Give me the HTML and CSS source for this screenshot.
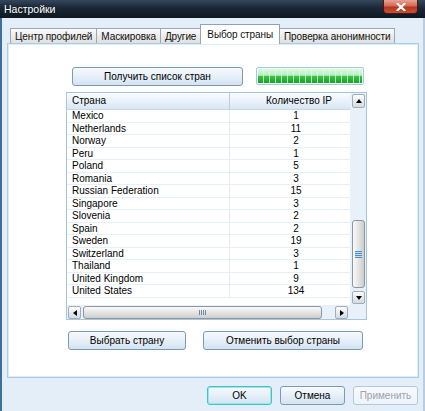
FILE: index.html
```html
<!DOCTYPE html>
<html lang="ru">
<head>
    <meta charset="UTF-8">
    <meta name="viewport" content="width=device-width, initial-scale=1.0">
    <title>Настройки</title>
    <link rel="stylesheet" href="styles.css">
</head>
<body>
    <div class="window">
        <div class="titlebar">
            <span class="title">Настройки</span>
            <span class="close">
                <svg width="10" height="8" viewBox="0 0 10 8"><path d="M1.5 0.8 L8.5 7.2 M8.5 0.8 L1.5 7.2" stroke="#fff" stroke-width="2.2" stroke-linecap="round"/></svg>
            </span>
        </div>
        <div class="client">
            <div class="tabs">
                <div class="tab">Центр профилей</div>
                <div class="tab">Маскировка</div>
                <div class="tab">Другие</div>
                <div class="tab active">Выбор страны</div>
                <div class="tab">Проверка анонимности</div>
            </div>
            <div class="pane">
                <div class="toolbar">
                    <button class="btn btn-fetch">Получить список стран</button>
                    <div class="progress"><div class="progress-fill"></div></div>
                </div>
                <div class="list">
                    <div class="grid">
                        <div class="head">
                            <div class="cell name">Страна</div>
                            <div class="cell count">Количество IP</div>
                        </div>
                        <div class="row"><span class="cell name">Mexico</span><span class="cell count">1</span></div>
                        <div class="row"><span class="cell name">Netherlands</span><span class="cell count">11</span></div>
                        <div class="row"><span class="cell name">Norway</span><span class="cell count">2</span></div>
                        <div class="row"><span class="cell name">Peru</span><span class="cell count">1</span></div>
                        <div class="row"><span class="cell name">Poland</span><span class="cell count">5</span></div>
                        <div class="row"><span class="cell name">Romania</span><span class="cell count">3</span></div>
                        <div class="row"><span class="cell name">Russian Federation</span><span class="cell count">15</span></div>
                        <div class="row"><span class="cell name">Singapore</span><span class="cell count">3</span></div>
                        <div class="row"><span class="cell name">Slovenia</span><span class="cell count">2</span></div>
                        <div class="row"><span class="cell name">Spain</span><span class="cell count">2</span></div>
                        <div class="row"><span class="cell name">Sweden</span><span class="cell count">19</span></div>
                        <div class="row"><span class="cell name">Switzerland</span><span class="cell count">3</span></div>
                        <div class="row"><span class="cell name">Thailand</span><span class="cell count">1</span></div>
                        <div class="row"><span class="cell name">United Kingdom</span><span class="cell count">9</span></div>
                        <div class="row"><span class="cell name">United States</span><span class="cell count">134</span></div>
                    </div>
                    <div class="vscroll">
                        <div class="sb-btn"><i class="arrow up"></i></div>
                        <div class="thumb thumb-v"><i class="grip-v"></i></div>
                        <div class="sb-btn"><i class="arrow down"></i></div>
                    </div>
                    <div class="hscroll">
                        <div class="sb-btn"><i class="arrow left"></i></div>
                        <div class="thumb thumb-h"><i class="grip-h"></i></div>
                        <div class="sb-btn sb-end"><i class="arrow right"></i></div>
                    </div>
                    <div class="corner"></div>
                </div>
                <div class="actions">
                    <button class="btn btn-pick">Выбрать страну</button>
                    <button class="btn btn-unpick">Отменить выбор страны</button>
                </div>
            </div>
            <div class="footer">
                <button class="btn btn-dialog btn-default">OK</button>
                <button class="btn btn-dialog">Отмена</button>
                <button class="btn btn-dialog" disabled>Применить</button>
            </div>
        </div>
    </div>
</body>
</html>
```

FILE: styles.css
```css
html, body {
    margin: 0;
    padding: 0;
}

body {
    width: 425px;
    height: 411px;
    overflow: hidden;
    font-family: "Liberation Sans", Arial, sans-serif;
    font-size: 10px;
    color: #000;
}

.window {
    height: 411px;
    display: flex;
    flex-direction: column;
}

/* caption */
.titlebar {
    height: 18px;
    flex: none;
    display: flex;
    align-items: flex-start;
    justify-content: space-between;
    background: linear-gradient(#34475b, #1a2736 45%, #0e1823);
}

.title {
    margin: 3px 0 0 4px;
    color: #fff;
    font-size: 10.5px;
    text-shadow: 0 0 3px rgba(0, 0, 0, 0.6);
}

.close {
    width: 35px;
    height: 14px;
    margin-right: 7px;
    box-sizing: border-box;
    border: 1px solid #4a1810;
    border-top: none;
    border-radius: 0 0 4px 4px;
    background: linear-gradient(#eaa394, #d46a55 45%, #b83520 55%, #c65234);
    display: flex;
    align-items: center;
    justify-content: center;
}

.client {
    flex: 1;
    background: #e4eef9;
    border-left: 2px solid #3f6f9b;
    border-right: 2px solid #b9cde0;
    display: flex;
    flex-direction: column;
}

/* tabs */
.tabs {
    display: flex;
    align-items: flex-end;
    height: 19px;
    margin: 6px 0 0 8px;
    position: relative;
    z-index: 1;
}

.tab {
    height: 15px;
    box-sizing: border-box;
    padding: 1px 4px 0;
    margin-right: -1px;
    border: 1px solid #9aa8b6;
    border-bottom: none;
    background: linear-gradient(#fbfbfb, #ececec 50%, #e0e0e0);
    color: #111;
    line-height: 13px;
    letter-spacing: -0.1px;
    white-space: nowrap;
}

.tab.active {
    height: 20px;
    margin-bottom: -1px;
    padding: 3px 6px 0;
    background: #fff;
    border-color: #8aa4bc;
    position: relative;
    z-index: 1;
}

/* page */
.pane {
    height: 335px;
    margin: 0 4px 0 5px;
    box-sizing: border-box;
    border: 1px solid #a9cbe6;
    box-shadow: inset 0 0 0 1px #dcecf8;
    background: #fff;
    padding: 23px 0 0 58px;
}

.btn {
    height: 19px;
    box-sizing: border-box;
    padding: 0;
    border: 1px solid #7b9ab8;
    border-radius: 3px;
    background: linear-gradient(#f7fafd, #e6eff8 50%, #d3e3f2);
    font-family: inherit;
    font-size: 10px;
    color: #000;
}

.toolbar {
    display: flex;
    align-items: flex-start;
    margin-left: 6px;
}

.btn-fetch {
    width: 171px;
}

.progress {
    width: 108px;
    height: 18px;
    margin-left: 13px;
    box-sizing: border-box;
    border: 1px solid #a8c9dd;
    border-radius: 2px;
    padding: 1px;
    background: #f4fbff;
}

.progress-fill {
    height: 100%;
    background:
        repeating-linear-gradient(90deg, transparent 0 5px, rgba(225, 250, 230, 0.75) 5px 6px),
        linear-gradient(#dcf9e1, #b4efbf 45%, #3cc248 52%, #17a321);
}

/* country list */
.list {
    width: 301px;
    height: 228px;
    margin-top: 6px;
    box-sizing: border-box;
    border: 1px solid #a6c5df;
    display: grid;
    grid-template-columns: 283px 16px;
    grid-template-rows: 212px 14px;
}

.grid {
    overflow: hidden;
}

.head {
    height: 17px;
    display: flex;
    box-sizing: border-box;
    border-bottom: 1px solid #c4d8ea;
    background: linear-gradient(#fbfdff, #eaf2fa 50%, #d8e6f3);
    line-height: 15px;
}

.row {
    height: 12.5px;
    display: flex;
    box-sizing: border-box;
    border-bottom: 1px solid #e7eff8;
    line-height: 11.5px;
}

.cell {
    display: block;
    white-space: nowrap;
}

.cell.name {
    width: 163px;
    flex: none;
    box-sizing: border-box;
    padding-left: 5px;
    border-right: 1px solid #e2ebf5;
}

.head .cell.name {
    border-right-color: #b9cde1;
}

.cell.count {
    flex: 1;
    text-align: center;
    padding-left: 12px;
}

.head .cell.count {
    padding-left: 18px;
}

/* scroll bars */
.vscroll,
.hscroll,
.corner {
    background: #e8f0f9;
}

.vscroll {
    grid-row: 1;
    grid-column: 2;
    display: flex;
    flex-direction: column;
    padding: 1px 1px 1px 2px;
}

.hscroll {
    grid-row: 2;
    grid-column: 1;
    display: flex;
    padding: 1px 2px 0 1px;
}

.sb-btn {
    width: 13px;
    height: 13px;
    flex: none;
    box-sizing: border-box;
    border: 1px solid #a2acb6;
    border-radius: 2px;
    background: linear-gradient(#fdfdfd, #e8ebee 50%, #d6dbe0);
    display: flex;
    align-items: center;
    justify-content: center;
}

.vscroll .sb-btn:first-child {
    height: 14px;
}

.sb-end {
    margin-left: auto;
}

.arrow {
    width: 0;
    height: 0;
    border: 3px solid transparent;
}

.arrow.up {
    border-bottom: 4px solid #000;
    border-top-width: 0;
    margin-top: -1px;
}

.arrow.down {
    border-top: 4px solid #000;
    border-bottom-width: 0;
}

.arrow.left {
    border-right: 4px solid #000;
    border-left-width: 0;
}

.arrow.right {
    border-left: 4px solid #000;
    border-right-width: 0;
}

.thumb {
    box-sizing: border-box;
    border: 1px solid #8e969e;
    border-radius: 3px;
    display: flex;
    align-items: center;
    justify-content: center;
}

.thumb-v {
    height: 68px;
    margin: auto 0 3px;
    background: linear-gradient(90deg, #fafafa, #e4e4e4 50%, #cdcdcd);
}

.thumb-h {
    width: 239px;
    height: 13px;
    margin-left: 2px;
    background: linear-gradient(#fafafa, #e4e4e4 50%, #cdcdcd);
}

.grip-v {
    width: 7px;
    height: 7px;
    background: repeating-linear-gradient(#4f8fc9 0 1px, #bfe0f8 1px 2px);
}

.grip-h {
    width: 7px;
    height: 5px;
    background: repeating-linear-gradient(90deg, #6d88a6 0 1px, transparent 1px 2px);
}

.corner {
    grid-row: 2;
    grid-column: 2;
}

/* buttons under the list */
.actions {
    display: flex;
    margin: 11px 0 0 2px;
}

.btn-pick {
    width: 118px;
}

.btn-unpick {
    width: 160px;
    margin-left: 17px;
}

/* dialog buttons */
.footer {
    display: flex;
    justify-content: flex-end;
    gap: 8px;
    margin-top: 8px;
    padding-right: 5px;
}

.btn-dialog {
    width: 65px;
}

.btn-default {
    border-color: #3cc4c8;
    box-shadow: inset 0 0 0 1px #9be6ea;
}

.btn-dialog:disabled {
    color: #9aa3ad;
    border-color: #b5c7d8;
    background: linear-gradient(#f7fafd, #edf3f9);
}
```
